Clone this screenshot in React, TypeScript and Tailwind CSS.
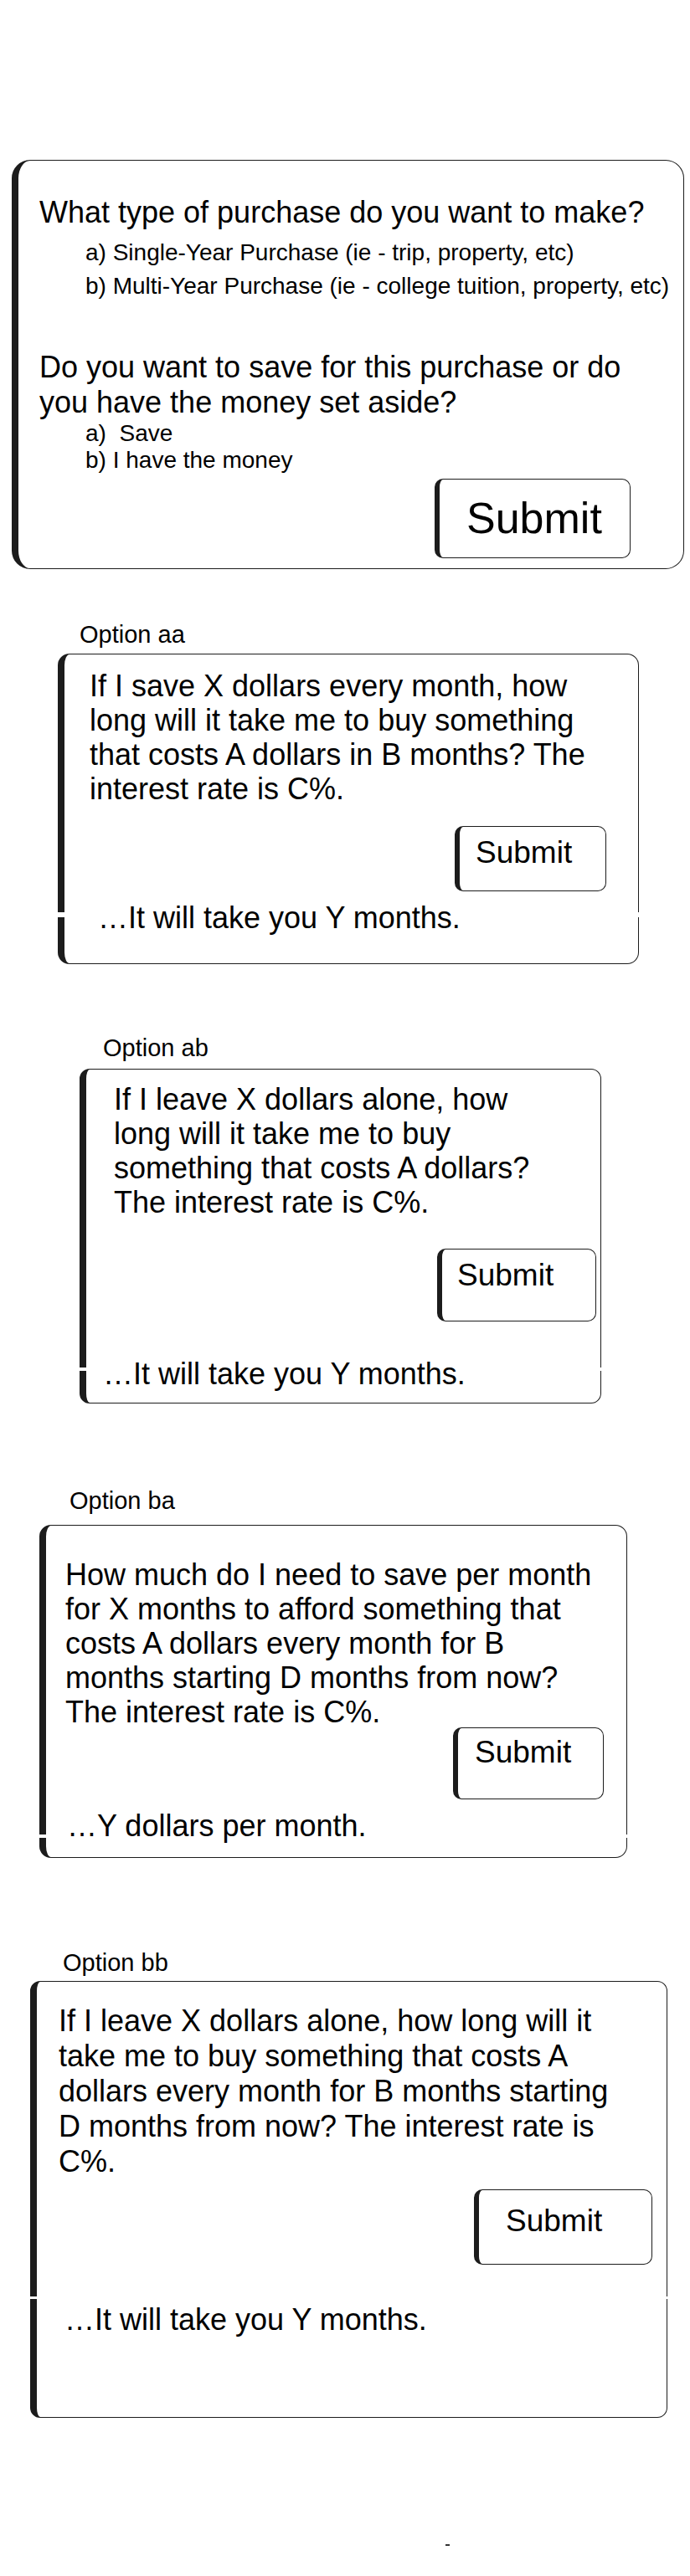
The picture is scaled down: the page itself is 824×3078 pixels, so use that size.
type OptionCardData = {
  label: string;
  labelClass: string;
  boxClass: string;
  bodyClass: string;
  lines: string[];
  buttonClass: string;
  result: string;
  resultClass: string;
  notchClass: string;
};

const cards: OptionCardData[] = [
  {
    label: "Option aa",
    labelClass: "mt-[61px] ml-[95px]",
    boxClass: "mt-[6px] ml-[69px] w-[694px] h-[371px] rounded-[14px] pt-[17px] pl-[30px] pr-[38px]",
    bodyClass: "leading-[41px]",
    lines: [
      "If I save X dollars every month, how",
      "long will it take me to buy something",
      "that costs A dollars in B months? The",
      "interest rate is C%.",
    ],
    buttonClass: "mt-[24px] w-[181px] h-[78px] pt-[12px] pl-[19px]",
    result: "\u2026It will take you Y months.",
    resultClass: "mt-[11px] ml-[10px]",
    notchClass: "top-[308px] h-[6px]",
  },
  {
    label: "Option ab",
    labelClass: "mt-[83px] ml-[123px]",
    boxClass: "mt-[8px] ml-[95px] w-[623px] h-[400px] rounded-[12px] pt-[15px] pl-[33px] pr-[5px]",
    bodyClass: "leading-[41px]",
    lines: [
      "If I leave X dollars alone, how",
      "long will it take me to buy",
      "something that costs A dollars?",
      "The interest rate is C%.",
    ],
    buttonClass: "mt-[35px] w-[190px] h-[87px] pt-[12px] pl-[18px]",
    result: "\u2026It will take you Y months.",
    resultClass: "mt-[42px] -ml-[13px]",
    notchClass: "top-[356px] h-[4px]",
  },
  {
    label: "Option ba",
    labelClass: "mt-[99px] ml-[83px]",
    boxClass: "mt-[12px] ml-[47px] w-[702px] h-[398px] rounded-[14px] pt-[38px] pl-[23px] pr-[27px]",
    bodyClass: "leading-[41px]",
    lines: [
      "How much do I need to save per month",
      "for X months to afford something that",
      "costs A dollars every month for B",
      "months starting D months from now?",
      "The interest rate is C%.",
    ],
    buttonClass: "-mt-[2px] w-[180px] h-[86px] pt-[10px] pl-[20px]",
    result: "\u2026Y dollars per month.",
    resultClass: "mt-[11px] ml-[2px]",
    notchClass: "top-[369px] h-[4px]",
  },
  {
    label: "Option bb",
    labelClass: "mt-[108px] ml-[75px]",
    boxClass: "mt-[5px] ml-[36px] w-[761px] h-[522px] rounded-[12px] pt-[26px] pl-[26px] pr-[17px]",
    bodyClass: "leading-[42px]",
    lines: [
      "If I leave X dollars alone, how long will it",
      "take me to buy something that costs A",
      "dollars every month for B months starting",
      "D months from now? The interest rate is",
      "C%.",
    ],
    buttonClass: "mt-[12px] w-[213px] h-[90px] pt-[18px] pl-[32px]",
    result: "\u2026It will take you Y months.",
    resultClass: "mt-[45px] ml-[7px]",
    notchClass: "top-[376px] h-[3px]",
  },
];

const SubmitButton = ({ className }: { className: string }) => {
  return (
    <div
      className={`flex shrink-0 items-start self-end rounded-[10px] border-[1.5px] border-l-[6px] border-[#1c1c1c] bg-white ${className}`}
    >
      <span className="text-[37px] leading-none">Submit</span>
    </div>
  );
};

const OptionCard = ({ card }: { card: OptionCardData }) => {
  return (
    <>
      <p className={`text-[29px] leading-[34px] ${card.labelClass}`}>
        {card.label}
      </p>
      <div
        className={`relative flex shrink-0 flex-col border-[1.5px] border-l-8 border-[#1c1c1c] ${card.boxClass}`}
      >
        <p className={`text-[36px] ${card.bodyClass}`}>
          {card.lines.map((line) => (
            <span key={line} className="block whitespace-nowrap">
              {line}
            </span>
          ))}
        </p>
        <SubmitButton className={card.buttonClass} />
        <p className={`whitespace-nowrap text-[36px] leading-[41px] ${card.resultClass}`}>
          {card.result}
        </p>
        {/* seam notches across the side borders */}
        <div className={`absolute -left-[9px] w-[11px] bg-white ${card.notchClass}`} />
        <div className={`absolute -right-[3px] w-[5px] bg-white ${card.notchClass}`} />
      </div>
    </>
  );
};

export default function App() {
  return (
    <div className="flex min-h-[3078px] w-[824px] flex-col bg-white font-['Liberation_Sans',Arial,sans-serif] text-black">
      <div className="mt-[191px] ml-[14px] flex h-[489px] w-[803px] shrink-0 flex-col rounded-[22px] border-[1.5px] border-l-8 border-[#1c1c1c] pt-[41px] pl-[25px]">
        <p className="whitespace-nowrap text-[36px] leading-[42px]">
          What type of purchase do you want to make?
        </p>
        <div className="mt-[7px] whitespace-nowrap pl-[55px] text-[28px] leading-[40px]">
          <p>a) Single-Year Purchase (ie - trip, property, etc)</p>
          <p>b) Multi-Year Purchase (ie - college tuition, property, etc)</p>
        </div>
        <p className="mt-[56px] whitespace-nowrap text-[36px] leading-[42px]">
          Do you want to save for this purchase or do
          <br />
          you have the money set aside?
        </p>
        <div className="whitespace-nowrap pl-[55px] text-[28px] leading-[32px]">
          <p className="whitespace-pre">a)  Save</p>
          <p>b) I have the money</p>
        </div>
        <div className="mt-[6px] mr-[63px] flex h-[95px] w-[234px] shrink-0 items-start self-end rounded-[10px] border-[1.5px] border-l-[6px] border-[#1c1c1c] pt-[20px] pl-[32px]">
          <span className="text-[52px] leading-none">Submit</span>
        </div>
      </div>

      {cards.map((card) => (
        <OptionCard key={card.label} card={card} />
      ))}

      <div className="mt-[151px] ml-[532px] h-[2px] w-[5px] shrink-0 bg-[#333]" />
    </div>
  );
}
